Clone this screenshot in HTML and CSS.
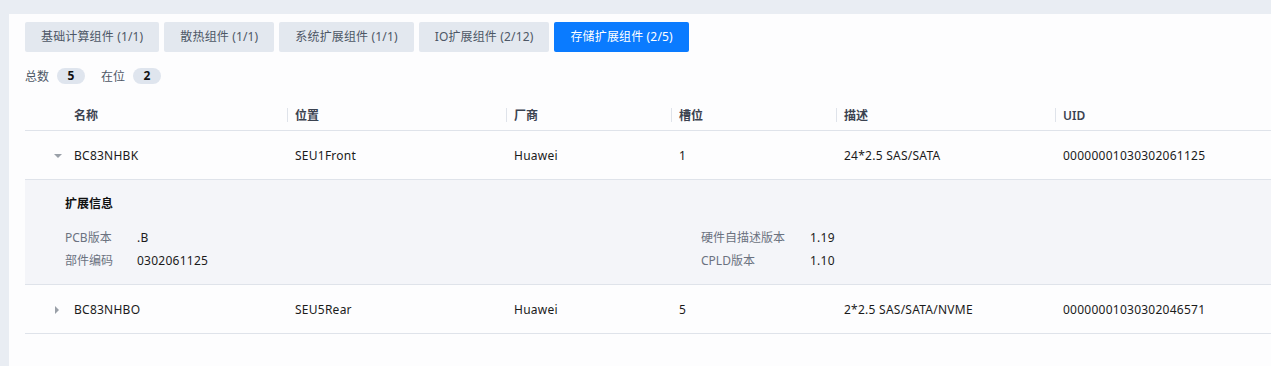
FILE: index.html
```html
<!DOCTYPE html>
<html lang="zh-CN">
<head>
  <meta charset="UTF-8">
  <title>存储扩展组件</title>
  <link rel="stylesheet" href="styles.css">
</head>
<body>
  <div class="panel">
    <div class="tabs">
      <div class="tab">基础计算组件 (1/1)</div>
      <div class="tab">散热组件 (1/1)</div>
      <div class="tab">系统扩展组件 (1/1)</div>
      <div class="tab">IO扩展组件 (2/12)</div>
      <div class="tab tab--active">存储扩展组件 (2/5)</div>
    </div>
    <div class="counts">
      <span class="counts__label">总数</span><span class="badge">5</span>
      <span class="counts__label">在位</span><span class="badge">2</span>
    </div>
    <table class="grid">
      <colgroup>
        <col style="width:41px">
        <col style="width:221px">
        <col style="width:219px">
        <col style="width:165px">
        <col style="width:165px">
        <col style="width:219px">
        <col>
      </colgroup>
      <thead>
        <tr>
          <th></th>
          <th>名称</th>
          <th><span class="sep"></span>位置</th>
          <th><span class="sep"></span>厂商</th>
          <th><span class="sep"></span>槽位</th>
          <th><span class="sep"></span>描述</th>
          <th><span class="sep"></span>UID</th>
        </tr>
      </thead>
      <tbody>
        <tr class="row">
          <td class="caret-cell"><span class="caret caret--down"></span></td>
          <td>BC83NHBK</td>
          <td>SEU1Front</td>
          <td>Huawei</td>
          <td>1</td>
          <td>24*2.5 SAS/SATA</td>
          <td>00000001030302061125</td>
        </tr>
        <tr class="detail">
          <td colspan="7">
            <div class="detail__title">扩展信息</div>
            <div class="detail__grid">
              <div class="kv"><span class="kv__key kv__key--short">PCB版本</span><span class="kv__val">.B</span></div>
              <div class="kv"><span class="kv__key">硬件自描述版本</span><span class="kv__val">1.19</span></div>
              <div class="kv"><span class="kv__key kv__key--short">部件编码</span><span class="kv__val">0302061125</span></div>
              <div class="kv"><span class="kv__key">CPLD版本</span><span class="kv__val">1.10</span></div>
            </div>
          </td>
        </tr>
        <tr class="row">
          <td class="caret-cell"><span class="caret caret--right"></span></td>
          <td>BC83NHBO</td>
          <td>SEU5Rear</td>
          <td>Huawei</td>
          <td>5</td>
          <td>2*2.5 SAS/SATA/NVME</td>
          <td>00000001030302046571</td>
        </tr>
      </tbody>
    </table>
  </div>
</body>
</html>
```

FILE: styles.css
```css
* {
  padding: 0;
  margin: 0;
  box-sizing: border-box;
}
html, body {
  height: 100%;
  overflow: hidden;
}
body {
  background: #e9edf3;
  font-family: "Noto Sans", "Noto Sans CJK SC", sans-serif;
  font-size: 12px;
  color: #1b1b1b;
}
.panel {
  margin: 14px 0 0 9px;
  height: 360px;
  background: #fdfdfe;
  padding: 8px 0 0 16px;
}
.tabs {
  display: flex;
  gap: 5px;
}
.tab {
  height: 30px;
  line-height: 30px;
  padding: 0 16px;
  border-radius: 2px;
  background: #e3e8ef;
  color: #4d5766;
  white-space: nowrap;
  letter-spacing: 0.15px;
}
.tab--active {
  background: #0a7bff;
  color: #fff;
}
.counts {
  display: flex;
  align-items: center;
  margin-top: 16px;
  height: 16px;
  color: #4d5766;
}
.counts__label {
  margin-right: 8px;
}
.badge {
  display: inline-block;
  width: 28px;
  height: 16px;
  line-height: 16px;
  border-radius: 8px;
  background: #dfe5ee;
  color: #111;
  font-weight: 700;
  text-align: center;
  margin-right: 16px;
}
.grid {
  margin-top: 16px;
  width: 1246px;
  border-collapse: collapse;
  table-layout: fixed;
}
.grid th {
  position: relative;
  height: 30px;
  padding: 1px 8px 0;
  text-align: left;
  font-weight: 600;
  color: #3b4250;
  border-bottom: 1px solid #dfe3ea;
}
.sep {
  position: absolute;
  left: 0;
  top: 8px;
  width: 1px;
  height: 14px;
  background: #dfe3ea;
}
.row td {
  height: 49px;
  padding: 1px 8px 0;
  border-bottom: 1px solid #dfe3ea;
  white-space: nowrap;
  letter-spacing: 0.25px;
}
.caret-cell {
  position: relative;
}
.caret {
  position: absolute;
  width: 0;
  height: 0;
}
.caret--down {
  left: 29px;
  top: 23px;
  border-left: 4px solid transparent;
  border-right: 4px solid transparent;
  border-top: 4px solid #9aa0a8;
}
.caret--right {
  left: 30px;
  top: 21px;
  border-top: 4px solid transparent;
  border-bottom: 4px solid transparent;
  border-left: 4px solid #9aa0a8;
}
.detail td {
  background: #f4f5f9;
  padding: 16px 40px 12px;
  border-bottom: 1px solid #dfe3ea;
}
.detail__title {
  line-height: 16px;
  font-weight: 700;
  color: #111;
  margin-bottom: 14px;
}
.detail__grid {
  display: grid;
  grid-template-columns: 636px 1fr;
}
.kv {
  display: flex;
  line-height: 23px;
}
.kv__key {
  width: 109px;
  color: #6b7280;
}
.kv__key--short {
  width: 72px;
}
.kv__val {
  letter-spacing: 0.25px;
}
```
